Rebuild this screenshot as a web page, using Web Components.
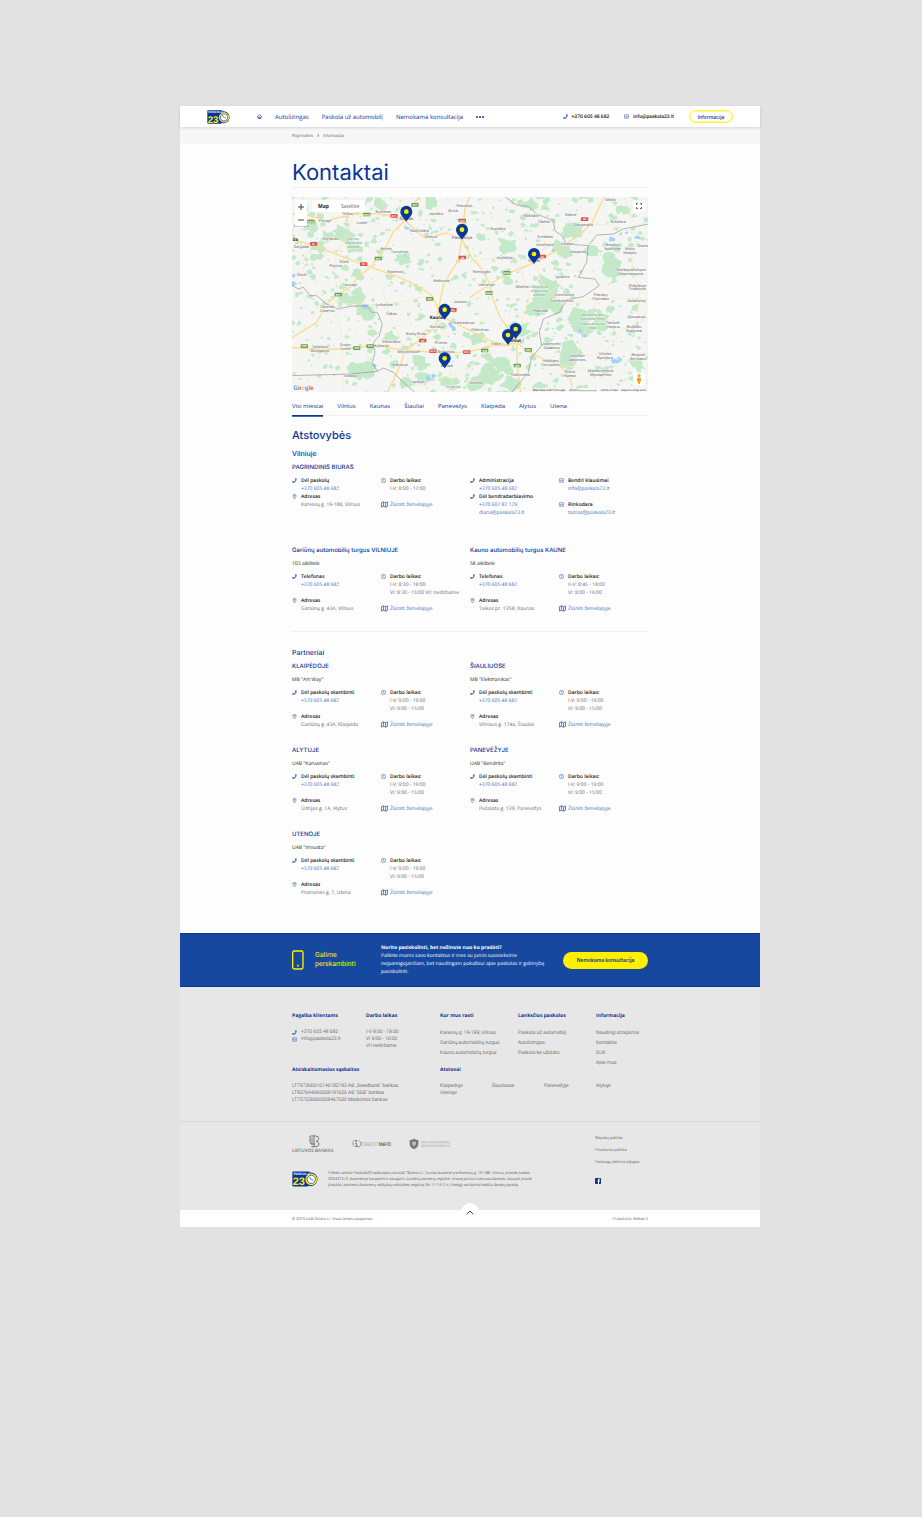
<!DOCTYPE html>
<html lang="lt">
<head>
<meta charset="utf-8">
<meta name="viewport" content="width=device-width, initial-scale=1">
<title>Kontaktai – Paskola23</title>
<style>
:root{--blue:#0b3596;--link:#456ab8;--ink:#161616;--soft:#6a6a6a;--yellow:#fff000;--line:#f0f0f0;
--head:Inter,"Liberation Sans",sans-serif;--text:Roboto,"Liberation Sans",sans-serif;--body:"Open Sans","Liberation Sans",sans-serif;--gutter:112px}
*{box-sizing:border-box}
body{margin:0;padding:106px 162px 290px 180px;background:#e2e2e2;font:400 5px/8px var(--body);color:var(--soft);text-rendering:geometricPrecision}
.sheet{background:#fdfdfd}
main{padding:0 var(--gutter) 36px}
h1,h2,h3{margin:0;color:var(--blue);font-family:var(--head)}
h1{font-size:22px;line-height:26px;font-weight:400;padding:16px 0 1px;border-bottom:1px solid var(--line);margin-bottom:9px}
h2{font-size:11px;line-height:14px;font-weight:500;margin-top:12px}
h3{font-size:7px;line-height:10px;font-weight:500;margin-top:7px}
.cards{display:grid;grid-template-columns:1fr 1fr}
.cards.gap{row-gap:18px;margin-top:5px}
hr{border:0;border-top:1px solid var(--line);margin:18px 0 16px}
.markets{margin-top:30px}
a{color:var(--link);text-decoration:none}
</style>
</head>
<body>
<div class="sheet">
<site-header></site-header>
<bread-crumb></bread-crumb>
<main>
<h1>Kontaktai</h1>
<city-map></city-map>
<city-tabs></city-tabs>
<h2>Atstovybės</h2>
<h3>Vilniuje</h3>
<contact-card heading="PAGRINDINIS BIURAS" wide>
<contact-item icon="phone" label="Dėl paskolų"><a href="tel:+37060548682">+370 605 48 682</a></contact-item>
<contact-item icon="clock" label="Darbo laikas:">I-V: 8:00 - 17:00</contact-item>
<contact-item icon="phone" label="Administracija"><a href="tel:+37060548682">+370 605 48 682</a></contact-item>
<contact-item icon="mail" label="Bendri klausimai"><a href="mailto:info@paskola23.lt">info@paskola23.lt</a></contact-item>
<contact-item icon="pin" label="Adresas">Kareivių g. 19-188, Vilnius</contact-item>
<contact-item icon="map" drop><a href="#map">Žiūrėti žemėlapyje</a></contact-item>
<contact-item icon="phone" label="Dėl bendradarbiavimo"><a href="tel:+37060782129">+370 607 82 129</a><br><a href="mailto:diana@paskola23.lt">diana@paskola23.lt</a></contact-item>
<contact-item icon="mail" label="Rinkodara" drop><a href="mailto:tomas@paskola23.lt">tomas@paskola23.lt</a></contact-item>
</contact-card>
<div class="cards markets">
<contact-card heading="Gariūnų automobilių turgus VILNIUJE" note="103 aikštelė">
<contact-item icon="phone" label="Telefonas"><a href="tel:+37060548682">+370 605 48 682</a></contact-item>
<contact-item icon="clock" label="Darbo laikas:">I-V: 8:30 - 18:00<br>VI: 8:30 - 15:00 VII: nedirbame</contact-item>
<contact-item icon="pin" label="Adresas">Gariūnų g. 43A, Vilnius</contact-item>
<contact-item icon="map" drop><a href="#map">Žiūrėti žemėlapyje</a></contact-item>
</contact-card>
<contact-card heading="Kauno automobilių turgus KAUNE" note="58 aikštelė">
<contact-item icon="phone" label="Telefonas"><a href="tel:+37060548682">+370 605 48 682</a></contact-item>
<contact-item icon="clock" label="Darbo laikas:">II-V: 8:45 - 18:00<br>VI: 8:00 - 16:00</contact-item>
<contact-item icon="pin" label="Adresas">Taikos pr. 135B, Kaunas</contact-item>
<contact-item icon="map" drop><a href="#map">Žiūrėti žemėlapyje</a></contact-item>
</contact-card>
</div>
<hr>
<h3>Partneriai</h3>
<div class="cards gap" id="partners"></div>
</main>
<call-banner></call-banner>
<site-footer></site-footer>
</div>
<script>
const ICONS={
phone:'<path d="M14.6 1.2 11.6.5c-.4-.1-.8.1-1 .5L9.300 4.200c-.1.4 0 .7.200.9l1.700 1.400a10.500 10.500 0 0 1-4.900 4.900L4.900 9.700c-.2-.3-.6-.4-.9-.2L.8 10.900c-.4.1-.6.5-.5.9l.7 3c.1.400.4.700.800.700C9.200 15.500 15.300 9.400 15.300 2c0-.4-.3-.7-.7-.8z" fill="currentColor" stroke="none"/>',
mail:'<rect x="1" y="2.500" width="14" height="11" rx="1.500"/><path d="m1.500 5.500 5 3.800q1.500 1 3 0l5-3.800"/>',
clock:'<circle cx="8" cy="8" r="6.800"/><path d="M8 4v4.500l2.500 1.500"/>',
pin:'<path d="M8 15.500C4.500 11 3 9 3 6a5 5 0 0 1 10 0c0 3-1.500 5-5 9.500z"/><circle cx="8" cy="6" r="1.500"/>',
map:'<path d="m1 4 4.500-2 5 2L15 2v10l-4.500 2-5-2L1 14zM5.500 2v10M10.500 4v10"/>',
home:'<path d="M1 8.500 8 2.500l7 6M3 7.500V14h10V7.500M6.500 14v-4h3v4"/>'};
const icon=(n,s=5)=>`<svg class="i ${n}" width="${s}" height="${s}" viewBox="0 0 16 16" fill="none" stroke="currentColor" stroke-width="2" aria-hidden="true">${ICONS[n]}</svg>`;
const LOGO=`<svg class="logo" viewBox="0 0 69 42" role="img" aria-label="Paskola 23"><path d="M3 1h40q4 0 5 3a18 18 0 1 1-4 35l-3 2H4q-3 0-3-3V3q0-2 2-2z" fill="#0b3596"/><text x="4" y="10" font-family="Liberation Sans" font-weight="700" font-size="9" fill="#fff">PASKOLA</text><text x="2" y="38" font-family="Liberation Sans" font-weight="700" font-size="29" fill="#fff000">23</text><circle cx="51" cy="22" r="14" fill="#fff" stroke="#fff000" stroke-width="3"/><circle cx="51" cy="22" r="11" fill="none" stroke="#0b3596" stroke-width="2"/><path d="m46 16 6 7 4 1" stroke="#0b3596" stroke-width="2" fill="none"/></svg>`;
const BASE=`*{box-sizing:border-box}a{color:inherit;text-decoration:none}button{font:inherit;margin:0;padding:0;cursor:pointer}.i{display:block;flex:none;color:#456ab8}`;
const define=(name,css,html)=>customElements.define(name,class extends HTMLElement{
connectedCallback(){if(this.shadowRoot)return;this.attachShadow({mode:'open'}).innerHTML=`<style>${BASE}${css}</style>`+(typeof html==='function'?html(this):html)}});

define('site-header',`:host{display:flex;align-items:center;height:21px;padding:0 27px;background:#fff;box-shadow:0 1px 3px #0002;position:relative;font:500 5px/8px var(--head);color:var(--blue)}
.logo{display:block;width:23px;height:14px;margin-right:27px}nav{display:flex;align-items:center;gap:13px;font:500 6px/8px var(--body)}nav .i{color:var(--blue)}
.more{border:0;background:none;display:flex;gap:1px}.more i{width:2px;height:2px;border-radius:50%;background:var(--blue)}
.side{margin-left:auto;display:flex;align-items:center;gap:15px}.side a{display:flex;align-items:center;gap:4px;color:var(--ink);font:500 5px/8px var(--text)}
.side button{width:44px;height:13px;border:1px solid #fff23a;border-radius:7px;background:#fff;color:var(--blue);box-shadow:0 0 0 1px #fff89b inset}`,
`<a href="#" aria-label="Paskola23">${LOGO}</a><nav><a href="#" aria-label="Pradžia">${icon('home')}</a><a href="#">Autolizingas</a><a href="#">Paskola už automobilį</a><a href="#">Nemokama konsultacija</a><button class="more" aria-label="Daugiau"><i></i><i></i><i></i></button></nav>
<div class="side"><a href="tel:+37060548682">${icon('phone')}+370 605 48 682</a><a href="mailto:info@paskola23.lt">${icon('mail')}info@paskola23.lt</a><button>Informacija</button></div>`);

define('bread-crumb',`:host{display:flex;gap:4px;align-items:center;height:17px;padding:0 var(--gutter);background:#f7f7f7;font:400 4px/8px var(--head);color:#666}b{font-size:5px}`,
`<a href="#">Pagrindinis</a><b>›</b><span>Informacija</span>`);

define('city-tabs',`:host{display:flex;gap:14px;margin-top:8px;border-bottom:1px solid var(--line);font:500 6px/8px var(--body);color:var(--blue)}
button{border:0;background:none;color:inherit;padding:2px 0 5px;margin-bottom:-1px;border-bottom:1px solid transparent}button[aria-selected=true]{border-color:var(--blue);box-shadow:0 1px var(--link)}`,
['Visi miestai','Vilnius','Kaunas','Šiauliai','Panevėžys','Klaipėda','Alytus','Utena'].map((t,i)=>`<button role="tab" aria-selected="${!i}">${t}</button>`).join(''));

define('contact-item',`:host{display:grid;grid-template-columns:9px 1fr;align-items:start;line-height:8px;white-space:nowrap}:host([drop]){margin-top:8px}
.i{margin-top:1px}.i.map{margin-top:0}strong{display:block;font-weight:600;color:var(--ink)}`,
e=>`${icon(e.getAttribute('icon'),e.getAttribute('icon')==='map'?7:5)}<div>${e.hasAttribute('label')?`<strong>${e.getAttribute('label')}</strong>`:''}<slot></slot></div>`);

define('contact-card',`:host{display:block}h4{margin:0;font:500 6px/8px var(--head);color:var(--blue)}p{margin:5px 0 0;color:var(--ink)}
.grid{display:grid;grid-template-columns:1fr 1fr;margin-top:5px}:host([wide]) .grid{grid-template-columns:repeat(4,1fr)}:host([wide]){margin-top:5px}`,
e=>`<h4>${e.getAttribute('heading')}</h4>${e.hasAttribute('note')?`<p>${e.getAttribute('note')}</p>`:''}<div class="grid"><slot></slot></div>`);

document.getElementById('partners').innerHTML=[
['KLAIPĖDOJE','MB &quot;Art Way&quot;','Gariūnų g. 43A, Klaipėda'],['ŠIAULIUOSE','MB &quot;Elektronikas&quot;','Vilniaus g. 174a, Šiauliai'],
['ALYTUJE','UAB &quot;Karvainas&quot;','Ūdrijos g. 1A, Alytus'],['PANEVĖŽYJE','UAB &quot;Bendrita&quot;','Pušaloto g. 139, Panevėžys'],
['UTENOJE','UAB &quot;Irmusta&quot;','Pramonės g. 7, Utena']].map(([c,n,a])=>`<contact-card heading="${c}" note="${n}">
<contact-item icon="phone" label="Dėl paskolų skambinti"><a href="tel:+37060548682">+370 605 48 682</a></contact-item>
<contact-item icon="clock" label="Darbo laikas:">I-V: 9:00 - 19:00<br>VI: 9:00 - 15:00</contact-item>
<contact-item icon="pin" label="Adresas">${a}</contact-item>
<contact-item icon="map" drop><a href="#map">Žiūrėti žemėlapyje</a></contact-item></contact-card>`).join('');

/* The map is drawn in its own units, three to a CSS pixel at the usual width. */
function drawMap(){
let seed=23;const rnd=()=>(seed=(seed*16807)%2147483647)/2147483647;
let woods='';
const blob=(x,y,r)=>{let d='';for(let k=0;k<9;k++){const a=k*0.698,q=r*(.4+rnd()*.8);d+=(k?'L':'M')+Math.round(x+Math.cos(a)*q*1.2)+' '+Math.round(y+Math.sin(a)*q)}return d+'z'};
for(let i=0;i<900;i++)woods+=blob(rnd()*1080,rnd()*595,2+rnd()*rnd()*12);
[[160,115,34],[190,150,28],[85,155,20],[340,185,22],[200,235,22],[60,90,22],[205,300,26],[225,350,26],[170,310,22],[300,425,22],[220,515,34],[200,525,26],[385,500,24],[400,545,24],[480,560,26],[350,560,20],[110,120,18],[270,25,20],[420,20,20],[655,150,24],[640,160,18],[840,100,34],[820,160,30],[900,165,22],[965,220,32],[955,190,24],[770,270,38],[760,300,32],[790,330,26],[740,340,26],[870,360,32],[880,400,30],[930,380,28],[840,470,32],[830,500,22],[690,400,28],[640,510,34],[600,530,34],[560,560,28],[660,560,30],[750,570,22],[560,430,20],[590,480,18],[1040,500,20],[1000,40,18],[720,25,22]].forEach(b=>woods+=blob(...b)+blob(b[0]+8,b[1]+6,b[2]*.7));
const lakes=[[8,265,10],[10,240,6],[350,98,6],[965,130,10],[975,155,8],[1045,125,8],[480,385,10],[492,398,8],[345,180,4],[870,405,8],[880,420,7],[975,495,12],[990,490,9],[415,550,9],[430,540,7],[255,510,8],[745,355,5],[740,290,5],[790,165,6],[890,172,5],[225,332,10],[1010,110,5],[1040,390,6],[685,230,4]].map(b=>blob(...b)).join('');
const labels=[[105,80,'Plungė'],[34,95,'Kretinga'],[173,59,'Telšiai'],[280,53,'Kuršėnai'],[216,84,'Luokė'],[388,108,'Radviliškis'],[422,127,'Šeduva'],[438,58,'Joniškis'],[490,48,'Biržai'],[523,35,'Pasvalys'],[122,134,'Rietavas'],[34,157,'Gargždai'],[288,162,'Kelmė'],[328,171,'Tytuvėnai'],[162,202,'Šilalė'],[137,214,'Pajūris'],[35,242,'Šilutė'],[316,233,'Raseiniai'],[180,272,'Tauragė'],[455,260,'Kėdainiai'],[112,338,'Sovetsk'],[112,349,'Советск'],[282,330,'Jurbarkas'],[305,359,'Šakiai'],[510,323,'Jonava'],[378,418,'Kazlų Rūda'],[440,397,'Garliava'],[522,386,'Kaišiadorys'],[303,443,'Vilkaviškis'],[356,471,'Marijampolė'],[453,446,'Prienai'],[468,471,'Birštonas'],[90,457,'Volodino'],[90,470,'Володино'],[166,451,'Gusev'],[166,462,'Гусев'],[275,455,'Kybartai'],[330,511,'Kalvarija'],[181,543,'Gołdap'],[382,563,'Lazdijai'],[724,65,'Rokiškis'],[762,82,'Obeliai'],[624,102,'Kupiškis'],[765,126,'Svėdasai'],[765,152,'Antalieptė'],[832,148,'Zarasai'],[880,90,'Daugavpils'],[985,83,'Krāslava'],[962,17,'Malta'],[842,62,'Ilūkste'],[645,190,'Anykščiai'],[575,232,'Ramygala'],[590,272,'Ukmergė'],[697,278,'Molėtai'],[817,247,'Ignalina'],[863,171,'Visaginas'],[968,151,'Braslaw'],[968,162,'Браслав'],[1020,162,'Miory'],[1020,174,'Миоры'],[1058,155,'Disna'],[1022,226,'Sharkawshchyna'],[1022,237,'Шарковщина'],[1042,273,'Glybokaye'],[1042,284,'Глубокое'],[822,302,'Švenčionys'],[815,320,'Švenčionėliai'],[932,302,'Pastavy'],[932,313,'Поставы'],[752,350,'Pabradė'],[1040,318,'Dokshytsy'],[1040,368,'Докшицы'],[1032,398,'Budslau'],[1032,410,'Будслав'],[970,385,'Narach'],[970,396,'Нарочь'],[570,405,'Elektrėnai'],[618,447,'Trakai'],[785,447,'Ashmyany'],[785,459,'Ошмяны'],[860,484,'Smarhon'],[860,496,'Сморгонь'],[945,479,'Vileyka'],[945,491,'Вилейка'],[1045,482,'Begoml'],[1045,493,'Бегомль'],[782,499,'Halshany'],[782,511,'Гольшаны'],[840,532,'Krevo'],[840,543,'Крево'],[932,530,'Maladzyechna'],[932,542,'Молодечно'],[692,541,'Šalčininkai'],[558,565,'Varėna']];
const green=[[190,134,'Varnių'],[190,146,'regioninis'],[190,158,'parkas'],[490,578,'Dzūkijos'],[747,276,'Labanoras'],[747,288,'regioninis'],[747,300,'parkas'],[907,361,'Narachanski'],[907,373,'National Park'],[907,387,'Нарочанский'],[907,400,'парк']];
const shield=(x,y,t,c)=>`<rect x="${x-11}" y="${y-6}" width="22" height="11" rx="2" fill="${c}"/><text x="${x}" y="${y+3}" font-size="8" fill="#fff" text-anchor="middle" font-weight="700">${t}</text>`;
const pin=(x,y)=>`<path d="M${x} ${y+30}C${x-6} ${y+19} ${x-18} ${y+12} ${x-18} ${y}a18 18 0 0 1 36 0c0 12-12 19-18 30z" fill="#083a94"/><circle cx="${x}" cy="${y}" r="7" fill="#fff000"/>`;
const main='M0 130 60 145 120 168 220 207 315 240 370 264 425 298 440 330 450 360 500 385 540 404 600 435 650 448 680 440M0 55 50 58 110 75 190 55 250 54 290 58 345 75 385 110 405 128 470 112 515 130M345 75 310 108 285 160 245 210 205 245 180 275 140 300 110 325 80 380 0 430M440 365 460 270 485 225 505 195 515 130 525 40 540 0M515 130 545 185 575 220 600 265 605 300 630 365 670 420 680 440M540 305 600 265 650 235 735 200 800 165 870 115 905 85 920 50 945 0M680 440 710 465 760 490 810 510 840 545 850 595M680 445 682 500 692 595M0 455 80 460 150 460 250 450 320 460 460 473 540 468 610 450 660 450M450 360 430 400 380 440 345 465 330 510 290 595M345 75 360 40 390 0';
const small='M40 0 20 60 5 130M190 55 170 110 140 180 130 230 170 280M290 58 270 0M60 145 35 240 60 290M315 240 280 280 290 330 230 325 110 325M425 298 350 315 282 325M140 340 155 420 160 590M345 465 310 380 285 325M450 360 470 440 480 520 490 595M540 200 580 190 645 185 690 215 720 300 680 430M735 200 760 270 830 330 930 305 1075 310M880 90 960 85 1075 130M720 0 750 40 765 150 735 200M830 240 760 310M932 300 900 360 860 480 840 540M860 480 945 475 1000 400 1050 380 1075 340M930 540 870 520 785 500M930 540 990 500 1075 490M930 540 1000 595M600 440 550 510 480 540 380 570M1000 0 1030 80M1020 160 1030 230 1050 280 1040 400';
const edge='M0 265 25 280 40 275 60 300 80 300 110 325 145 340 180 332 230 330 245 350 262 350 277 385 268 420 250 440 255 470 247 500 262 527 180 535 0 540M262 527 280 517 310 530 345 565 380 595M640 0 680 28 715 32 740 55 790 75 795 105 815 120 830 145 895 150 890 200 865 245 915 250 928 270 880 303 830 312 808 350 760 370 748 410 755 450 725 485 715 530 690 560 660 595M895 150 920 118 970 115 1000 100 1075 85';
const t=(a,c,s)=>a.map(([x,y,w])=>`<text x="${x}" y="${y}" font-size="${s}" fill="${c}" text-anchor="middle" stroke="#fff" stroke-width="2" paint-order="stroke">${w}</text>`).join('');
return `<svg class="map" viewBox="6 4 1068 585" role="img" aria-label="Lietuvos žemėlapis"><rect width="1080" height="600" fill="#f5f5f4"/><path d="${woods}" fill="#c4e9c9"/><path d="${lakes}" fill="#9fd1fb"/>
<path d="${small}" fill="none" stroke="#fbe9ba" stroke-width="2"/><path d="${main}" fill="none" stroke="#fbdc8b" stroke-width="4" stroke-linejoin="round"/><path d="${edge}" fill="none" stroke="#929292" stroke-width="2" stroke-linejoin="round"/>
${[[230,57,'E272'],[63,78,'E272'],[375,28,'E77'],[265,189,'E77'],[145,297,'E77'],[419,310,'E67'],[43,452,'E28'],[200,458,'E28'],[240,452,'E28'],[651,232,'E262'],[597,292,'E262'],[584,465,'E28'],[715,463,'E28'],[682,510,'E85']].map(s=>shield(...s,'#6d9f51')).join('')}${[[312,61,'A11'],[517,75,'A10'],[71,145,'A1'],[221,206,'A1'],[517,186,'A8'],[489,343,'A6'],[398,435,'A5'],[429,467,'A16'],[530,470,'A16'],[757,183,'A6'],[884,71,'A6']].map(s=>shield(...s,'#df5353')).join('')}
${t(labels,'#666',12)}${t(green,'#5a9c67',12)}${t([[349,72,'Šiauliai'],[516,129,'Panevėžys'],[732,198,'Utena'],[470,515,'Alytus']],'#444',13)}
<g font-weight="700">${t([[443,370,'Kaunas'],[672,439,'Vilnius'],[16,137,'da']],'#222',14)}</g>
${[[349,48],[516,102],[732,175],[464,342],[677,400],[654,418],[464,488]].map(p=>pin(...p)).join('')}
<text x="10" y="583" font-size="19" font-weight="500" stroke="#fff" stroke-width="2" paint-order="stroke"><tspan fill="#4285f4">G</tspan><tspan fill="#ea4335">o</tspan><tspan fill="#fbbc05">o</tspan><tspan fill="#4285f4">g</tspan><tspan fill="#34a853">l</tspan><tspan fill="#ea4335">e</tspan></text>
<path d="M725 577h349v12H725z" fill="#f7f7f7" opacity=".8"/><g font-size="9" fill="#333"><text x="728" y="586">Map data ©2019 Google</text><text x="838" y="586">20 km</text><path d="M866 581v4h52v-4" fill="none" stroke="#333"/><text x="930" y="586">Terms of Use</text><text x="994" y="586">Report a map error</text></g></svg>`}
define('city-map',`:host{display:block;position:relative;overflow:hidden;font-family:var(--text);font-weight:400}.map{display:block;width:100%;height:auto}
button{border:0;background:#fff;color:#222;display:grid;place-items:center}.zoom{position:absolute;left:3px;top:3px;width:12px;display:grid}.zoom button{height:13px}
.type{position:absolute;left:20px;top:3px;display:flex;font:400 5px/8px var(--body)}.type button{height:12px;padding:0 6px}.type button:first-child{font-weight:700}.type button+button{color:#666}
.full,.man{position:absolute;right:3px;width:12px;height:12px}.full{top:3px}.man{bottom:7px}`,
()=>drawMap()+`<div class="zoom"><button aria-label="Priartinti"><svg width="6" height="6" viewBox="0 0 6 6"><path d="M0 3h6M3 0v6" stroke="#444"/></svg></button><button aria-label="Atitolinti"><svg width="6" height="6" viewBox="0 0 6 6"><path d="M0 3h6" stroke="#444"/></svg></button></div><div class="type"><button>Map</button><button>Satellite</button></div>
<button class="full" aria-label="Visas ekranas"><svg width="6" height="6" viewBox="0 0 18 18" fill="none" stroke="#555" stroke-width="3"><path d="M1 6V1h5M12 1h5v5M17 12v5h-5M6 17H1v-5"/></svg></button><button class="man" aria-label="Street View"><svg width="6" height="10" viewBox="0 0 18 30"><circle cx="9" cy="5" r="5" fill="#f4b22e"/><path d="M4 11h10l2 9h-3l-1 9H6l-1-9H2z" fill="#f39b1d"/></svg></button>`);

define('call-banner',`:host{display:flex;align-items:center;min-height:54px;padding:0 var(--gutter);background:#15489e;border-block:1px solid #0b3596;color:#fff;font:400 5px/8px var(--body)}
.phone{width:12px;height:20px;margin-right:11px;flex:none}.call{flex:none;width:66px;font:400 7px/9px var(--text);color:var(--yellow)}p{margin:0;flex:0 1 172px}b{display:block;font-weight:700}
button{margin-left:auto;flex:none;width:85px;height:17px;border:0;border-radius:9px;background:var(--yellow);color:var(--blue);font:600 5px/8px var(--head)}`,
`<svg class="phone" viewBox="0 0 36 60" fill="none" stroke="#fff000" stroke-width="4"><rect x="2" y="3" width="31" height="54" rx="5"/><path d="M15 47h5" stroke-width="5"/></svg><div class="call">Galime<br>perskambinti</div><p><b>Norite pasiskolinti, bet nežinote nuo ko pradėti?</b>Palikite mums savo kontaktus ir mes su jumis susisieksime neįpareigojančiam, bet naudingam pokalbiui apie paskolas ir galimybę pasiskolinti.</p><button>Nemokama konsultacija</button>`);

const list=a=>a.map(t=>`<a href="#">${t}</a>`).join('');
define('site-footer',`:host{display:block;background:#e7e7e7;font:300 5px/7px var(--text);color:#333}
.top{display:grid;grid-template-columns:148fr 208fr;padding:25px var(--gutter) 17px}h5{margin:0 0 9px;font:700 5px/8px var(--body);color:var(--blue)}
.half{display:grid;grid-template-rows:54px auto;white-space:nowrap}.two{display:grid;grid-template-columns:1fr 1fr}.three{display:grid;grid-template-columns:78fr 78fr 52fr}.links a{display:block;line-height:8px;margin-bottom:2px}
.line{display:flex;gap:4px;align-items:center}.reps{display:grid;grid-template-columns:repeat(4,1fr)}
.legal{border-top:1px solid #dadada;display:grid;grid-template-columns:303fr 53fr;padding:13px var(--gutter) 22px;font-size:4px;line-height:6px}
.badges{display:flex;align-items:center;height:17px;gap:17px;margin-bottom:18px;color:#777}.badges svg{display:block}
.about{display:flex;gap:10px;align-items:center}.about .logo{width:26px;height:16px;flex:none}p{margin:0;white-space:nowrap}
.rules{white-space:nowrap}.rules a{display:block;margin-bottom:6px}.rules a.fb{margin:13px 0 0}
.end{position:relative;display:flex;justify-content:space-between;align-items:center;height:17px;padding:0 var(--gutter);background:#fff;font-size:4px}
.up{position:absolute;left:50%;top:-7px;width:18px;height:18px;margin-left:-9px;border:0;border-radius:50%;background:#fff;display:grid;place-items:center}`,
`<div class="top"><div class="half"><div class="two"><div><h5>Pagalba klientams</h5><a class="line" href="tel:+37060548682">${icon('phone')}+370 605 48 682</a><a class="line" href="mailto:info@paskola23.lt">${icon('mail')}info@paskola23.lt</a></div><div><h5>Darbo laikas</h5>I-V 8:00 - 18:00<br>VI 8:00 - 16:00<br>VII nedirbame</div></div>
<div><h5>Atsiskaitomosios sąskaitos</h5>LT797300010146182193 AB „Swedbank“ bankas<br>LT937044060008191626 AB "SEB" bankas<br>LT757230000009467030 Medicinos bankas</div></div>
<div class="half"><div class="three links"><div><h5>Kur mus rasti</h5>${list(['Kareivių g. 19-188, Vilnius','Gariūnų automobilių turgus','Kauno automobilių turgus'])}</div><div><h5>Lanksčios paskolos</h5>${list(['Paskola už automobilį','Autolizingas','Paskola be užstato'])}</div><div><h5>Informacija</h5>${list(['Naudingi straipsniai','Kontaktai','DUK','Apie mus'])}</div></div>
<div><h5>Atstovai</h5><div class="reps">${list(['Klaipėdoje','Šiauliuose','Panevėžyje','Alytuje','Utenoje'])}</div></div></div></div>
<div class="legal"><div><div class="badges">
<svg width="43" height="17" viewBox="0 0 129 51"><path d="M55 3h16q9 0 9 8 0 7-8 8 9 1 9 8 0 8-10 8H58M66 0v37M54 3v19q0 5 8 5h8M60 8v22" fill="none" stroke="#777" stroke-width="3"/><text x="0" y="50" font-family="Open Sans" font-size="14" font-weight="600" fill="#777">LIETUVOS BANKAS</text></svg>
<svg width="40" height="10" viewBox="0 0 120 30"><path d="M10 3A11 11 0 0 0 6 22M20 4A11 11 0 0 1 18 25" fill="none" stroke="#777" stroke-width="2"/><circle cx="13" cy="6" r="3" fill="#777"/><path d="M9 13h5v9m-5 0h9" fill="none" stroke="#777" stroke-width="3"/><text x="27" y="21" font-family="Inter" font-size="15" fill="#888">CREDIT<tspan font-weight="700" fill="#666">INFO</tspan></text></svg>
<svg width="43" height="12" viewBox="0 0 129 36"><path d="M15 2q7 4 13 4v12q-1 11-13 16Q3 29 2 18V6q7 0 13-4z" fill="#777"/><path d="M9 11h12v6q-1 5-6 8-5-3-6-8z" fill="#bbb"/><text x="36" y="15" font-family="Roboto" font-size="8" fill="#888">VALSTYBINĖ DUOMENŲ</text><path d="M36 18h89" stroke="#aaa"/><text x="36" y="27" font-family="Roboto" font-size="8" fill="#888">APSAUGOS INSPEKCIJA</text></svg></div>
<div class="about">${LOGO}<p>Prekės ženklo Paskola23 valdytojas yra UAB "Sotero LT", kurios buveinė yra Kareivių g. 19-188, Vilnius, įmonės kodas<br>302431373, duomenys kaupiami ir saugomi Juridinių asmenų registre. Įmonę prižiūri Lietuvos bankas, taip pat įmonė<br>įtraukta į asmens duomenų valdytojų valstybės registrą (Nr. P7147) ir į Viešąjį vartojimo kredito davėjų sąrašą.</p></div></div>
<div class="rules">${list(['Slapukų politika','Privatumo politika','Paslaugų teikimo sąlygos'])}<a class="fb" href="#" aria-label="Facebook"><svg width="6" height="6" viewBox="0 0 18 18"><rect width="18" height="18" rx="2" fill="#0b3596"/><path d="M12 18v-7h3V8h-3V6q0-1 1-1h2V2h-3Q9 2 9 6v2H7v3h2v7z" fill="#fff"/></svg></a></div></div>
<div class="end"><span>© 2019 UAB Sotero LT Visos teisės saugomos</span><a href="#">Prijaukinta: Webas.lt</a><button class="up" aria-label="Į viršų"><svg width="8" height="5" viewBox="0 0 24 15"><path d="m2 13 10-10 10 10" fill="none" stroke="#444" stroke-width="3"/></svg></button></div>`);
</script>
</body>
</html>
